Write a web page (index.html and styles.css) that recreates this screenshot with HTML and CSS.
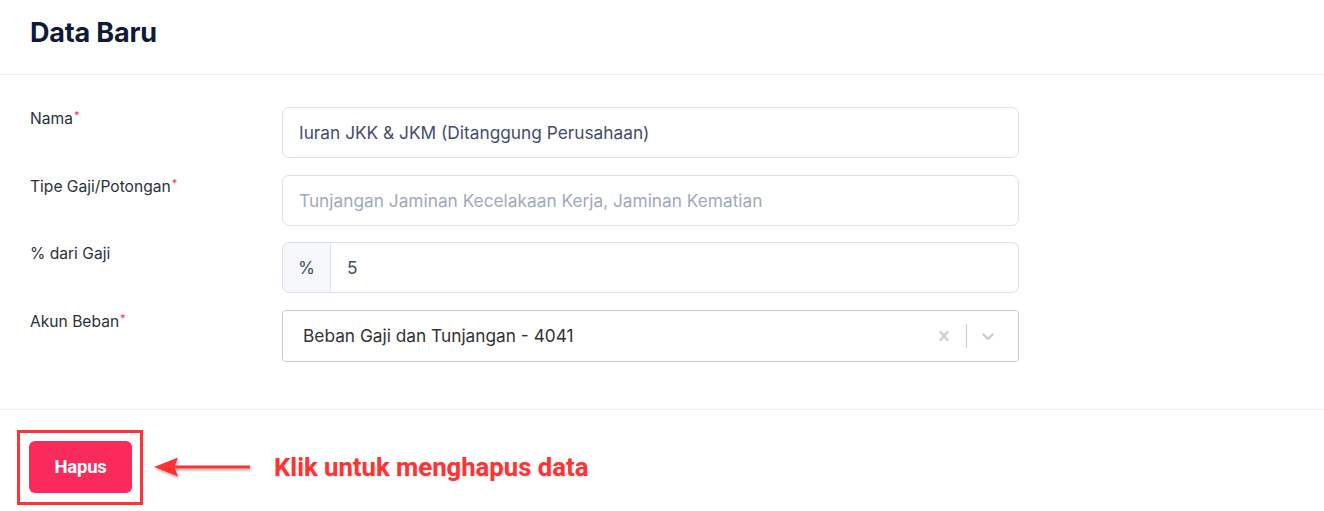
FILE: index.html
```html
<!DOCTYPE html>
<html lang="id">
<head>
<meta charset="utf-8">
<title>Data Baru</title>
<link rel="stylesheet" href="styles.css">
</head>
<body>
<div class="page">
  <header class="head">
    <h1 class="title">Data Baru</h1>
  </header>
  <main class="form">
    <div class="row">
      <label class="label">Nama<span class="req">*</span></label>
      <div class="field"><div class="input">Iuran JKK &amp; JKM (Ditanggung Perusahaan)</div></div>
    </div>
    <div class="row">
      <label class="label">Tipe Gaji/Potongan<span class="req">*</span></label>
      <div class="field"><div class="input placeholder">Tunjangan Jaminan Kecelakaan Kerja, Jaminan Kematian</div></div>
    </div>
    <div class="row">
      <label class="label">% dari Gaji</label>
      <div class="field group">
        <span class="addon">%</span>
        <div class="input joined">5</div>
      </div>
    </div>
    <div class="row">
      <label class="label">Akun Beban<span class="req">*</span></label>
      <div class="field">
        <div class="select">
          <span class="select-value">Beban Gaji dan Tunjangan - 4041</span>
          <span class="select-ind">
            <svg class="ico" width="20" height="20" viewBox="0 0 20 20"><path d="M14.348 14.849c-.469.469-1.229.469-1.697 0L10 11.819l-2.651 3.029c-.469.469-1.229.469-1.697 0-.469-.469-.469-1.229 0-1.697l2.758-3.150-2.759-3.152c-.469-.469-.469-1.228 0-1.697.469-.469 1.228-.469 1.697 0L10 8.183l2.651-3.031c.469-.469 1.228-.469 1.697 0 .469.469.469 1.229 0 1.697l-2.758 3.152 2.758 3.150c.469.469.469 1.229 0 1.698z" fill="#cccccc"/></svg>
            <span class="sep"></span>
            <svg class="ico" width="20" height="20" viewBox="0 0 20 20"><path d="M4.516 7.548c.436-.446 1.043-.481 1.576 0L10 11.295l3.908-3.747c.533-.481 1.141-.446 1.574 0 .436.445.408 1.197 0 1.615-.406.418-4.695 4.502-4.695 4.502-.217.223-.502.335-.787.335s-.57-.112-.789-.335c0 0-4.287-4.084-4.695-4.502s-.436-1.170 0-1.615z" fill="#cccccc"/></svg>
          </span>
        </div>
      </div>
    </div>
  </main>
  <footer class="foot">
    <div class="btn-frame">
      <button class="btn-danger" type="button">Hapus</button>
    </div>
    <div class="note">
      <svg class="arrow" width="100" height="28" viewBox="0 0 100 28">
        <defs>
          <filter id="sh" x="-10%" y="-40%" width="130%" height="200%">
            <feDropShadow dx="1" dy="2" stdDeviation="1.2" flood-color="#000" flood-opacity="0.3"/>
          </filter>
        </defs>
        <g filter="url(#sh)">
          <path d="M1 12 L25 2.5 L22 10.5 L97 10.5 L97 13.5 L22 13.5 L25 21.5 Z" fill="#ff3333"/>
        </g>
      </svg>
      <span class="note-text">Klik untuk menghapus data</span>
    </div>
  </footer>
</div>
</body>
</html>
```
FILE: styles.css
```css
* { box-sizing: border-box; }
html, body { margin: 0; padding: 0; background: #ffffff; }
body { font-family: Inter, "Noto Sans", sans-serif; color: #2b2f38; }

.page { width: 1324px; min-height: 511px; }

.head {
  height: 75px;
  padding: 0 30px;
  border-bottom: 1px solid #eef0f3;
  display: flex;
  align-items: center;
}
.title {
  margin: 0;
  font-size: 27px;
  font-weight: 700;
  color: #0f1a3b;
  letter-spacing: -0.2px;
  padding-bottom: 10px;
}

.form {
  padding: 32px 30px 47px;
  display: flex;
  flex-direction: column;
  gap: 16.5px;
  border-bottom: 1px solid #eef0f3;
}
.row {
  display: grid;
  grid-template-columns: 252px 737px;
  align-items: start;
}
.label {
  font-size: 15.6px;
  color: #2d3039;
  padding-top: 2px;
  line-height: 20px;
}
.req {
  color: #f5305d;
  font-size: 11px;
  vertical-align: top;
  position: relative;
  top: -4px;
  margin-left: 1px;
}

.field { display: flex; }
.input {
  flex: 1;
  height: 51px;
  border: 1px solid #dde0ee;
  border-radius: 7px;
  padding: 0 16px;
  display: flex;
  align-items: center;
  font-size: 17.3px;
  color: #434d6f;
}
.input.placeholder { color: #a1a9c0; }
.group .addon {
  width: 49px;
  height: 51px;
  background: #f7f8fa;
  border: 1px solid #dde0ee;
  border-radius: 7px 0 0 7px;
  display: flex;
  align-items: center;
  justify-content: center;
  font-size: 17.3px;
  color: #434d6f;
}
.input.joined {
  border-left: none;
  border-radius: 0 7px 7px 0;
}

.select {
  flex: 1;
  height: 52px;
  border: 1px solid #cccccc;
  border-radius: 4px;
  display: flex;
  align-items: center;
  justify-content: space-between;
  padding: 0 0 0 20px;
  font-size: 17.3px;
  color: #333333;
}
.select-ind {
  display: flex;
  align-items: center;
  height: 100%;
}
.select-ind .ico { margin: 0 12px 0 8px; display: block; }
.select-ind .ico:last-child { margin: 0 20px 0 11px; }
.sep {
  width: 1px;
  height: 24px;
  background: #cccccc;
}

.foot {
  padding: 20px 0 0 17px;
  display: flex;
  align-items: center;
}
.btn-frame {
  border: 3px solid #ff3333;
  padding: 8px 8px 9px 9px;
}
.btn-danger {
  width: 103px;
  height: 52px;
  background: #fb2a5d;
  border: none;
  border-radius: 6px;
  color: #ffffff;
  font-family: Roboto, "Liberation Sans", sans-serif;
  font-weight: 700;
  font-size: 18.5px;
  letter-spacing: -0.2px;
}
.note {
  display: flex;
  align-items: center;
  margin-left: 10px;
}
.arrow { display: block; margin-top: 3px; }
.note-text {
  margin-left: 21px;
  font-family: Roboto, "Liberation Sans", sans-serif;
  font-weight: 700;
  font-size: 25.7px;
  color: #ff3333;
  text-shadow: 0 1px 2px rgba(0,0,0,0.12);
}
```
